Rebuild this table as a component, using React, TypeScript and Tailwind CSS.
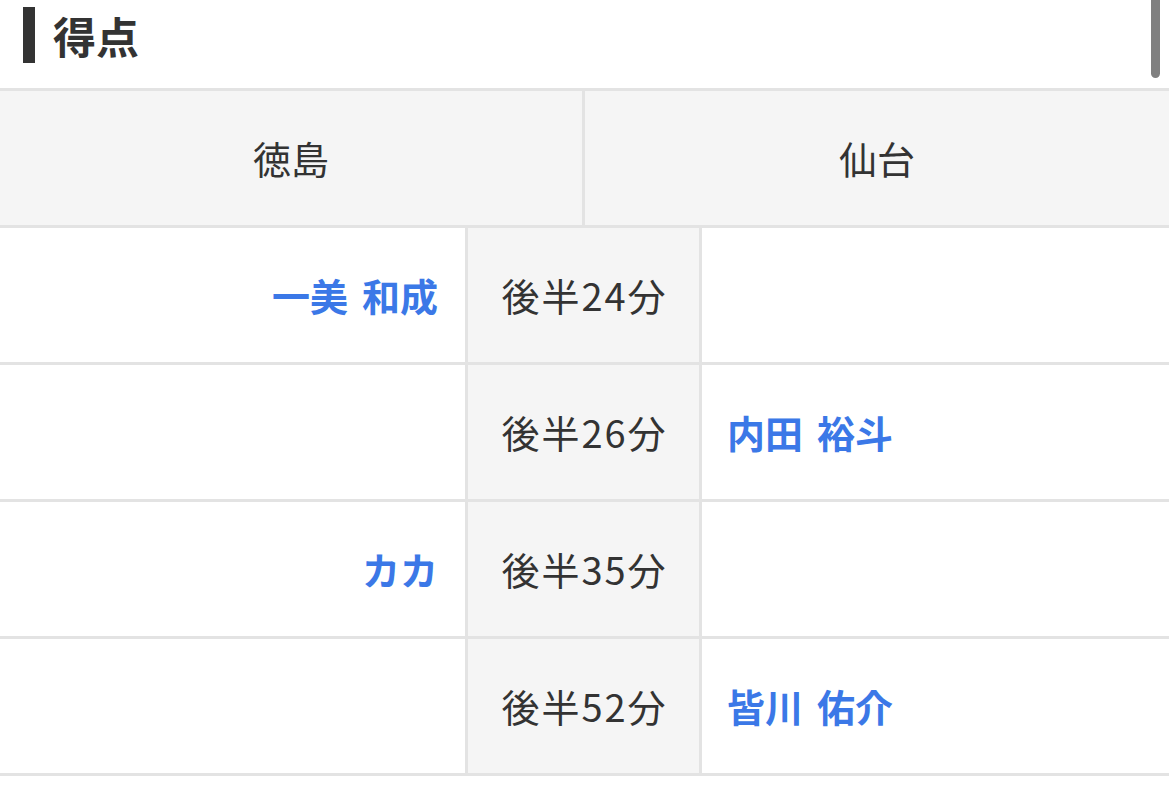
import React from "react";

const rows: { left: string[]; time: string; right: string[] }[] = [
  { left: ["一美", "和成"], time: "後半24分", right: [] },
  { left: [], time: "後半26分", right: ["内田", "裕斗"] },
  { left: ["カカ"], time: "後半35分", right: [] },
  { left: [], time: "後半52分", right: ["皆川", "佑介"] },
];

function Name({ parts }: { parts: string[] }) {
  return (
    <span className="flex gap-[14px]">
      {parts.map((p, i) => (
        <span key={i}>{p}</span>
      ))}
    </span>
  );
}

export default function App() {
  return (
    <div
      className="relative w-[1169px] h-[789px] overflow-hidden bg-white text-[#333333]"
      style={{ fontFamily: '"Noto Sans CJK JP", "Noto Sans", sans-serif' }}
    >
      <div className="h-[88px] pt-[7px] pl-[23px]">
        <div className="flex items-center h-[56px]">
          <div className="w-[12px] h-[56px] bg-[#333333]" />
          <div className="ml-[18px] text-[43px] font-bold leading-none text-[#333333]">得点</div>
        </div>
      </div>

      <div className="flex h-[140px] border-t-[3px] border-b-[3px] border-[#e3e3e3] bg-[#f5f5f5]">
        <div className="w-[585px] border-r-[3px] border-[#e3e3e3] flex items-center justify-center text-[38px] leading-none">
          徳島
        </div>
        <div className="flex-1 flex items-center justify-center text-[38px] leading-none">仙台</div>
      </div>

      {rows.map((r, i) => (
        <div key={i} className="flex h-[137px] border-b-[3px] border-[#e3e3e3]">
          <div className="w-[468px] border-r-[3px] border-[#e3e3e3] flex items-center justify-end pr-[27px] text-[38px] font-bold leading-none text-[#3b78e7]">
            <Name parts={r.left} />
          </div>
          <div className="w-[234px] border-r-[3px] border-[#e3e3e3] bg-[#f5f5f5] flex items-center justify-center pl-[2px] text-[38px] leading-none tracking-[2px]">
            {r.time}
          </div>
          <div className="flex-1 flex items-center justify-start pl-[25px] text-[38px] font-bold leading-none text-[#3b78e7]">
            <Name parts={r.right} />
          </div>
        </div>
      ))}

      <div className="absolute left-[1151px] top-[-12px] w-[9px] h-[90px] rounded-full bg-[#808080]" />
    </div>
  );
}
